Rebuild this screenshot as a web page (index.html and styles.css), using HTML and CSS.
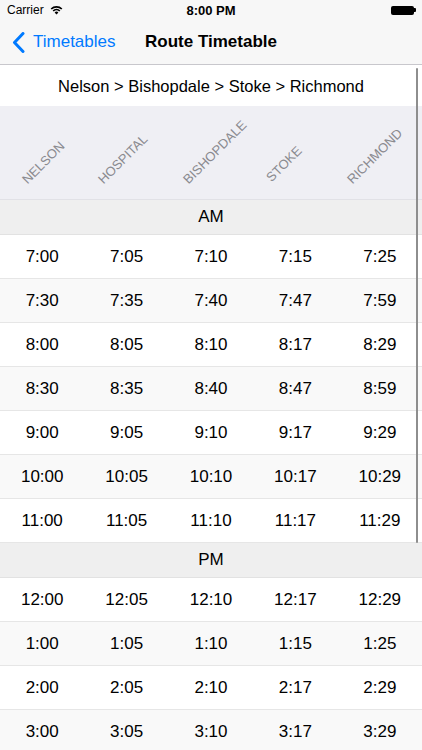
FILE: index.html
```html
<!DOCTYPE html>
<html lang="en">
<head>
    <meta charset="UTF-8">
    <meta name="viewport" content="width=device-width, initial-scale=1.0">
    <title>Route Timetable</title>
    <link rel="stylesheet" href="styles.css">
</head>
<body>

    <div class="phone">

        <!-- Status bar -->
        <div class="status-bar">
            <div class="carrier">
                Carrier
                <svg class="wifi" width="13" height="10" viewBox="0 0 13 10">
                    <path d="M0.6 3.4 A8.4 8.4 0 0 1 12.4 3.4 L11.2 4.6 A6.7 6.7 0 0 0 1.8 4.6 Z" fill="#000"/>
                    <path d="M2.6 5.4 A5.6 5.6 0 0 1 10.4 5.4 L9.2 6.6 A3.9 3.9 0 0 0 3.8 6.6 Z" fill="#000"/>
                    <path d="M4.6 7.4 A2.7 2.7 0 0 1 8.4 7.4 L6.5 9.4 Z" fill="#000"/>
                </svg>
            </div>
            <div class="clock">8:00 PM</div>
            <div class="battery">
                <span class="battery-body"></span>
                <span class="battery-nub"></span>
            </div>
        </div>

        <!-- Navigation bar -->
        <header class="nav-bar">
            <a href="#" class="back">
                <svg width="13" height="21" viewBox="0 0 13 21">
                    <path d="M11 1.5 L2.5 10.5 L11 19.5" fill="none" stroke="#007aff" stroke-width="3" stroke-linecap="round" stroke-linejoin="round"/>
                </svg>
                <span>Timetables</span>
            </a>
            <h1>Route Timetable</h1>
            <span></span>
        </header>

        <main class="timetable">
            <div class="route">Nelson &gt; Bishopdale &gt; Stoke &gt; Richmond</div>

            <div class="stops">
                <div class="stop stop-first"><span>Nelson</span></div>
                <div class="stop"><span>Hospital</span></div>
                <div class="stop"><span>Bishopdale</span></div>
                <div class="stop stop-short"><span>Stoke</span></div>
                <div class="stop stop-last"><span>Richmond</span></div>
            </div>

            <div class="period">AM</div>
            <div id="amRows"></div>

            <div class="period">PM</div>
            <div id="pmRows"></div>
        </main>

        <div class="scroll-indicator"></div>
    </div>

    <script>
        // Timetable data, one array per trip
        const amTrips = [
            ["7:00", "7:05", "7:10", "7:15", "7:25"],
            ["7:30", "7:35", "7:40", "7:47", "7:59"],
            ["8:00", "8:05", "8:10", "8:17", "8:29"],
            ["8:30", "8:35", "8:40", "8:47", "8:59"],
            ["9:00", "9:05", "9:10", "9:17", "9:29"],
            ["10:00", "10:05", "10:10", "10:17", "10:29"],
            ["11:00", "11:05", "11:10", "11:17", "11:29"]
        ];
        const pmTrips = [
            ["12:00", "12:05", "12:10", "12:17", "12:29"],
            ["1:00", "1:05", "1:10", "1:15", "1:25"],
            ["2:00", "2:05", "2:10", "2:17", "2:29"],
            ["3:00", "3:05", "3:10", "3:17", "3:29"]
        ];

        function fillRows(containerId, trips) {
            let container = document.getElementById(containerId);
            trips.forEach(function(trip) {
                let row = document.createElement("div");
                row.className = "row";
                trip.forEach(function(time) {
                    let cell = document.createElement("div");
                    cell.className = "cell";
                    cell.innerText = time;
                    row.appendChild(cell);
                });
                container.appendChild(row);
            });
        }

        fillRows("amRows", amTrips);
        fillRows("pmRows", pmTrips);
    </script>

</body>
</html>
```

FILE: styles.css
```css
body {
    margin: 0;
    padding: 0;
    font-family: "Liberation Sans", Arial, sans-serif;
    background-color: #fff;
    color: #000;
}
.phone {
    position: relative;
    width: 422px;
    height: 750px;
    overflow: hidden;
}

/* Status bar */
.status-bar {
    height: 20px;
    background-color: #f7f7f7;
    display: grid;
    grid-template-columns: 1fr auto 1fr;
    align-items: center;
    font-size: 12px;
}
.carrier {
    padding-left: 7px;
    display: flex;
    align-items: center;
    gap: 6px;
}
.clock {
    font-size: 13px;
    font-weight: bold;
}
.battery {
    justify-self: end;
    display: flex;
    align-items: center;
    padding-right: 6px;
}
.battery-body {
    width: 23px;
    height: 9px;
    background-color: #000;
    border-radius: 2px;
}
.battery-nub {
    width: 2px;
    height: 4px;
    background-color: #000;
    border-radius: 0 1px 1px 0;
}

/* Navigation bar */
.nav-bar {
    height: 44px;
    background-color: #f7f7f7;
    border-bottom: 1px solid #c8c7cc;
    display: grid;
    grid-template-columns: 1fr auto 1fr;
    align-items: center;
}
.back {
    display: flex;
    align-items: center;
    gap: 8px;
    padding-left: 12px;
    color: #007aff;
    text-decoration: none;
    font-size: 17px;
}
.nav-bar h1 {
    margin: 0;
    font-size: 17px;
    font-weight: bold;
}

/* Timetable */
.route {
    height: 41px;
    line-height: 42px;
    text-align: center;
    font-size: 16.5px;
}
.stops {
    height: 93px;
    background-color: #efeff4;
    border-bottom: 1px solid #e1e1e6;
    display: grid;
    grid-template-columns: repeat(5, minmax(0, 1fr));
}
.stop {
    min-width: 0;
    display: flex;
    align-items: flex-end;
    padding: 0 0 13px 21px;
}
.stop-first {
    padding-left: 29px;
}
.stop-short {
    padding-left: 20px;
    padding-bottom: 15px;
}
.stop-last {
    padding-left: 16px;
}
.stop span {
    display: block;
    white-space: nowrap;
    text-transform: uppercase;
    font-size: 13px;
    line-height: 13px;
    color: #8a8a8f;
    transform: rotate(-45deg);
    transform-origin: left bottom;
}
.period {
    height: 34px;
    line-height: 34px;
    text-align: center;
    font-size: 17px;
    background-color: #efefef;
    border-bottom: 1px solid #e2e2e2;
}
.row {
    height: 43px;
    display: grid;
    grid-template-columns: repeat(5, minmax(0, 1fr));
    align-items: center;
    border-bottom: 1px solid #e6e6e6;
    background-color: #fff;
}
.row:nth-child(even) {
    background-color: #f9f9f9;
}
.cell {
    text-align: center;
    font-size: 17px;
}

.scroll-indicator {
    position: absolute;
    right: 4px;
    top: 68px;
    width: 2.5px;
    height: 475px;
    border-radius: 2px;
    background-color: #8e8e8e;
}
```
